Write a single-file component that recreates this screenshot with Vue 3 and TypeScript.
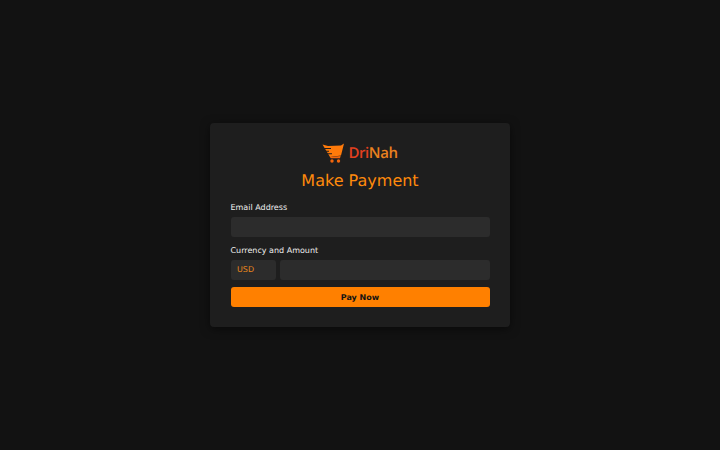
<script setup lang="ts">
const title = 'Make Payment'
</script>

<template>
  <main class="page">
    <form class="card" @submit.prevent>
      <div class="logo">
        <svg class="cart" width="22" height="20" viewBox="0 0 22 20" aria-hidden="true">
          <path d="M0.5 1.5 L6 3 L19 2.5 L22 0.5 L19 12.5 L8 14 Z" fill="#ff7a0a" />
          <path d="M1.5 5.5 H9 M0 8.2 H7 M3.5 10.8 H10" stroke="#1e1e1e" stroke-width="1.1" fill="none" />
          <path d="M8 14 L18.6 13 L18 15.3 H8.8 Z" fill="#f4660c" />
          <circle cx="10" cy="18" r="1.7" fill="#f4660c" />
          <circle cx="16.5" cy="18" r="1.7" fill="#f4660c" />
        </svg>
        <span class="brand"><span class="brand-red">Dri</span><span class="brand-orange">Nah</span></span>
      </div>
      <h1 class="title">{{ title }}</h1>
      <label class="label" for="email">Email Address</label>
      <input id="email" class="field" type="email" />
      <label class="label second" for="amount">Currency and Amount</label>
      <div class="row">
        <div class="currency">USD</div>
        <input id="amount" class="field grow" type="text" />
      </div>
      <button class="pay" type="submit">Pay Now</button>
    </form>
  </main>
</template>

<style>
html, body { margin: 0; background: #121212; }
</style>

<style scoped>
.page {
  width: 720px;
  height: 450px;
  display: flex;
  align-items: center;
  justify-content: center;
  background: #121212;
  font-family: "DejaVu Sans", sans-serif;
  text-rendering: geometricPrecision;
}
.card {
  box-sizing: border-box;
  width: 300px;
  height: 204px;
  padding: 19px 20.5px 20px;
  display: flex;
  flex-direction: column;
  background: #1e1e1e;
  border-radius: 4px;
  box-shadow: 0 2px 10px rgba(0, 0, 0, 0.5);
}
.logo {
  display: flex;
  flex: none;
  align-items: center;
  justify-content: center;
  gap: 4px;
  height: 22px;
}
.brand {
  font-family: "Open Sans", sans-serif;
  font-size: 15px;
  font-weight: 600;
  line-height: 22px;
  letter-spacing: -0.4px;
}
.brand-red { color: #e2401f; }
.brand-orange { color: #e8801f; }
.title {
  flex: none;
  margin: 6px 0 0;
  font-size: 16px;
  line-height: 22px;
  font-weight: 400;
  text-align: center;
  color: #ff8a0c;
}
.label {
  display: block;
  flex: none;
  margin-top: 8.5px;
  font-size: 8px;
  line-height: 14px;
  color: #eeeeee;
}
.label.second { margin-top: 6.5px; }
.field, .currency {
  box-sizing: border-box;
  flex: none;
  height: 20px;
  margin-top: 2.5px;
  border: none;
  border-radius: 3px;
  background: #2c2c2c;
  outline: none;
}
.field { display: block; width: 100%; padding: 0 7px; color: #fff; }
.row { display: flex; flex: none; gap: 3.5px; }
.currency {
  width: 45.5px;
  padding-left: 6.5px;
  font-size: 8px;
  line-height: 20px;
  color: #e8861c;
}
.field.grow { flex: 1; min-width: 0; width: auto; }
.pay {
  flex: none;
  height: 20px;
  margin-top: 7px;
  padding: 0;
  border: none;
  border-radius: 3px;
  background: #ff8000;
  color: #121212;
  font-family: "DejaVu Sans", sans-serif;
  font-size: 8px;
  font-weight: 700;
  text-rendering: geometricPrecision;
}
</style>
